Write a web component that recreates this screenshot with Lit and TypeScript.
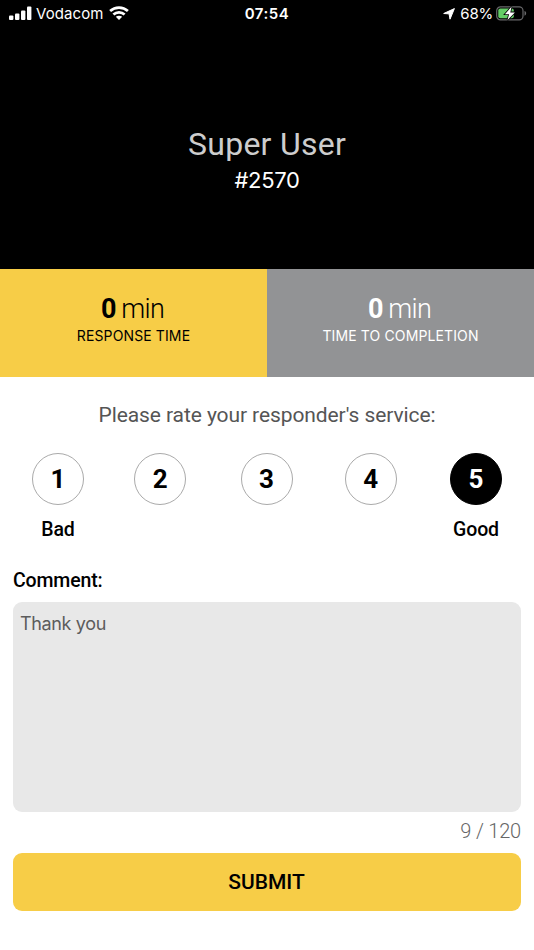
import { LitElement, html, css, svg } from "lit";
import { customElement, state } from "lit/decorators.js";
import { classMap } from "lit/directives/class-map.js";

@customElement("status-bar")
class StatusBar extends LitElement {
  static styles = css`
    :host { display: grid; grid-template-columns: 1fr auto 1fr; align-items: center; height: 28px; padding: 0 7px 0 9px; color: #fff; font: 400 15px/28px Inter, sans-serif; box-sizing: border-box; }
    .left, .right { display: flex; align-items: center; }
    .right { justify-content: flex-end; }
    svg { display: block; flex: none; }
    .signal, .wifi { margin-bottom: 2px; }
    .carrier { margin: 0 5px 0 4px; letter-spacing: 0.1px; }
    .time { font-weight: 600; letter-spacing: 0.5px; margin-right: 2px; }
    .percent { margin: 0 3px 0 5px; letter-spacing: -0.2px; }
  `;
  render() {
    return html`
      <div class="left">
        <svg class="signal" width="23" height="14" viewBox="0 0 23 14" fill="#fff">
          ${[[0, 4.5], [6, 6.5], [12, 9.5], [18, 13.5]].map(([x, h]) => svg`<rect x=${x} y=${14 - h} width="4.4" height=${h} rx="1"/>`)}
        </svg>
        <span class="carrier">Vodacom</span>
        <svg class="wifi" width="20" height="14" viewBox="0 0 20 14" fill="none" stroke="#fff" stroke-width="2.7">
          <path d="M1.1 5.1C6.1.5 13.9.5 18.9 5.1M4.4 8.6c3.1-2.9 8.1-2.9 11.2 0"/>
          <path d="M10 14l-3.2-3.2c1.8-1.5 4.6-1.5 6.4 0z" fill="#fff" stroke="none"/>
        </svg>
      </div>
      <div class="time">07:54</div>
      <div class="right">
        <svg width="12" height="12" viewBox="0 0 12 12" fill="#fff" stroke="#fff" stroke-width="1" stroke-linejoin="round"><path d="M11.4.6L7 11.2 6.2 6.7 5.3 5.8.7 5.5z"/></svg>
        <span class="percent">68%</span>
        <svg width="31" height="16" viewBox="0 0 31 16">
          <rect x=".7" y=".9" width="26.3" height="13" rx="3.8" fill="none" stroke="#69696b" stroke-width="1.2"/>
          <rect x="2.3" y="2.5" width="15.5" height="9.8" rx="2" fill="#64cd66"/>
          <path d="M28.5 5c2.2.7 2.2 4 0 4.7z" fill="#69696b"/>
          <path d="M15.6.6L8.9 8.2h4.2l-1.7 6 7.5-7.8h-4.6z" fill="#fff" stroke="#000" stroke-width="1.6" paint-order="stroke"/>
        </svg>
      </div>`;
  }
}

@customElement("app-root")
class AppRoot extends LitElement {
  @state() rating = 5;
  @state() comment = "Thank you";

  static styles = css`
    :host { display: flex; flex-direction: column; height: 950px; background: #fff; color: #000; font-family: Roboto, sans-serif; overflow: hidden; }
    * { box-sizing: border-box; }
    .hero { height: 269px; background: #000; text-align: center; }
    .name { margin-top: 96px; color: #cdcdcd; font-size: 32px; line-height: 40px; letter-spacing: 0.25px; }
    .number { color: #fff; font: 400 22px/32px Inter, sans-serif; letter-spacing: -0.35px; }
    .stats { display: grid; grid-template-columns: 1fr 1fr; height: 108px; text-align: center; }
    .stat { background: #f7cd47; padding-top: 24px; }
    .stat.grey { background: #929395; color: #fff; }
    .value { font-size: 27px; line-height: 32px; font-weight: 300; letter-spacing: -0.7px; word-spacing: -1px; padding-right: 2px; }
    .value b { font-weight: 700; letter-spacing: 0; }
    .label { font: 400 14px/22px Inter, sans-serif; letter-spacing: 0.12px; }
    .prompt { margin-top: 24px; text-align: center; color: #555; font-size: 21px; line-height: 29px; letter-spacing: -0.09px; }
    .ratings { display: flex; justify-content: space-between; margin: 23px 32px 0; }
    .choice { width: 52px; display: flex; flex-direction: column; align-items: center; }
    .choice:nth-child(2) { margin-right: 3px; margin-left: -2px; }
    .choice:nth-child(3) { margin-left: -1px; }
    .choice:nth-child(4) { margin-right: 1px; }
    .circle { width: 52px; height: 52px; border: 1px solid #aaa; border-radius: 50%; display: grid; place-items: center; background: #fff; color: #000; font: 700 26px/1 Roboto, sans-serif; padding: 0; }
    .circle.selected { background: #000; color: #fff; border-color: #000; }
    .caption { margin-top: 13px; font-size: 19.5px; line-height: 24px; font-weight: 500; letter-spacing: -0.1px; }
    .heading { margin: 27px 13px 0; font-size: 19.5px; line-height: 24px; font-weight: 500; letter-spacing: -0.15px; }
    .box { margin: 9px 13px 0; height: 210px; border-radius: 9px; background: #e8e8e8; padding: 10px 7px; color: #5c5c5c; font: 400 18px/24px Inter, sans-serif; letter-spacing: -0.35px; }
    .count { margin: 7px 13px 0; text-align: right; color: #666; font-size: 20px; line-height: 24px; font-weight: 300; letter-spacing: -0.2px; }
    .submit { margin: 10px 13px 0; height: 58px; border: 0; border-radius: 9px; background: #f7cd47; color: #000; font: 500 21px/58px Roboto, sans-serif; padding: 0 1px 0 0; }
  `;

  render() {
    return html`
      <header class="hero">
        <status-bar></status-bar>
        <div class="name">Super User</div>
        <div class="number">#2570</div>
      </header>
      <section class="stats">
        <div class="stat"><div class="value"><b>0</b> min</div><div class="label">RESPONSE TIME</div></div>
        <div class="stat grey"><div class="value"><b>0</b> min</div><div class="label">TIME TO COMPLETION</div></div>
      </section>
      <div class="prompt">Please rate your responder's service:</div>
      <div class="ratings">
        ${[1, 2, 3, 4, 5].map((n) => html`
          <div class="choice">
            <button class=${classMap({ circle: true, selected: n === this.rating })} @click=${() => (this.rating = n)}>${n}</button>
            <div class="caption">${n === 1 ? "Bad" : n === 5 ? "Good" : "\u00a0"}</div>
          </div>`)}
      </div>
      <div class="heading">Comment:</div>
      <div class="box">${this.comment}</div>
      <div class="count">${this.comment.length} / 120</div>
      <button class="submit">SUBMIT</button>`;
  }
}
